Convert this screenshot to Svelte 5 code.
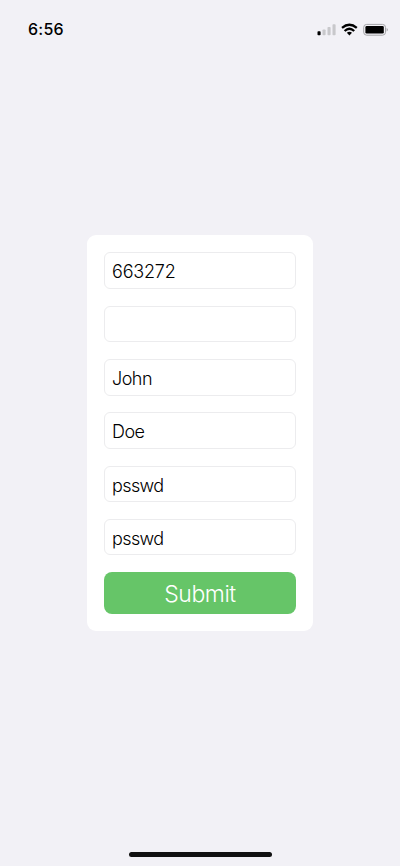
<script>
  const fields = [
    { value: '663272', spacing: -0.2 },
    { value: '', spacing: 0 },
    { value: 'John', spacing: -0.5 },
    { value: 'Doe', spacing: -0.55 },
    { value: 'psswd', spacing: -0.6 },
    { value: 'psswd', spacing: -0.6 }
  ];
</script>

<div class="screen">
  <header class="status">
    <span class="time">6:56</span>
    <svg class="indicators" width="72" height="14" viewBox="0 0 72 14" aria-hidden="true">
      <rect x="1.5" y="8.2" width="3.1" height="4" rx=".8" fill="#000" />
      <rect x="6.5" y="6.4" width="3.1" height="5.8" rx=".8" fill="#c8c8cb" />
      <rect x="11.5" y="3.9" width="3.1" height="8.3" rx=".8" fill="#c8c8cb" />
      <rect x="16.5" y="1.2" width="3.1" height="11" rx=".8" fill="#c8c8cb" />
      <g fill="none" stroke="#000" stroke-width="2.3">
        <path d="M26 4.9Q33.4-1.3 40.8 4.9" />
        <path d="M28.6 8Q33.4 3.6 38.2 8" />
      </g>
      <path d="M33.4 12.4L30.8 9.8Q33.4 7.8 36 9.8Z" fill="#000" />
      <rect x="47.7" y="1.4" width="21.8" height="10.8" rx="3" fill="none" stroke="#a4a4a7" />
      <rect x="49.4" y="3.1" width="18.4" height="7.4" rx="1.3" fill="#000" />
      <path d="M70.6 5.1Q71.9 5.5 71.9 6.8T70.6 8.5Z" fill="#a4a4a7" />
    </svg>
  </header>

  <main>
    <div class="card">
      {#each fields as field}
        <div class="field" style:letter-spacing="{field.spacing}px">{field.value}</div>
      {/each}
      <button type="button">Submit</button>
    </div>
  </main>

  <div class="home"></div>
</div>

<style>
  :global(body) {
    margin: 0;
    background: #f2f1f6;
  }
  .screen {
    box-sizing: border-box;
    width: 400px;
    height: 866px;
    display: flex;
    flex-direction: column;
    align-items: center;
    background: #f2f1f6;
    color: #000;
    font-family: Inter, "Liberation Sans", sans-serif;
    overflow: hidden;
  }
  .status {
    box-sizing: border-box;
    width: 100%;
    height: 58px;
    padding: 0 12px 0 28px;
    display: flex;
    align-items: center;
    justify-content: space-between;
    flex: none;
  }
  .time {
    font-size: 16px;
    font-weight: 550;
    line-height: 20px;
    letter-spacing: 0.25px;
  }
  .indicators {
    margin-top: 1px;
  }
  main {
    padding-top: 177.4px;
    flex: 1;
  }
  .card {
    box-sizing: border-box;
    width: 226px;
    height: 395.6px;
    padding: 17px;
    display: flex;
    flex-direction: column;
    gap: 16.6px;
    background: #fff;
    border-radius: 9px;
  }
  .field {
    box-sizing: border-box;
    height: 36.7px;
    flex: none;
    padding: 0 7px;
    border: 1px solid #ececee;
    border-radius: 6px;
    font-size: 18px;
    font-weight: 350;
    line-height: 37px;
    white-space: nowrap;
  }
  button {
    height: 41.8px;
    flex: none;
    padding: 2px 0 0;
    border: 0;
    border-radius: 8px;
    background: #66c568;
    color: #fff;
    font: 350 23px/41px Inter, "Liberation Sans", sans-serif;
    letter-spacing: -0.45px;
  }
  .home {
    width: 143px;
    height: 5px;
    margin-bottom: 9px;
    flex: none;
    border-radius: 3px;
    background: #111;
  }
</style>
